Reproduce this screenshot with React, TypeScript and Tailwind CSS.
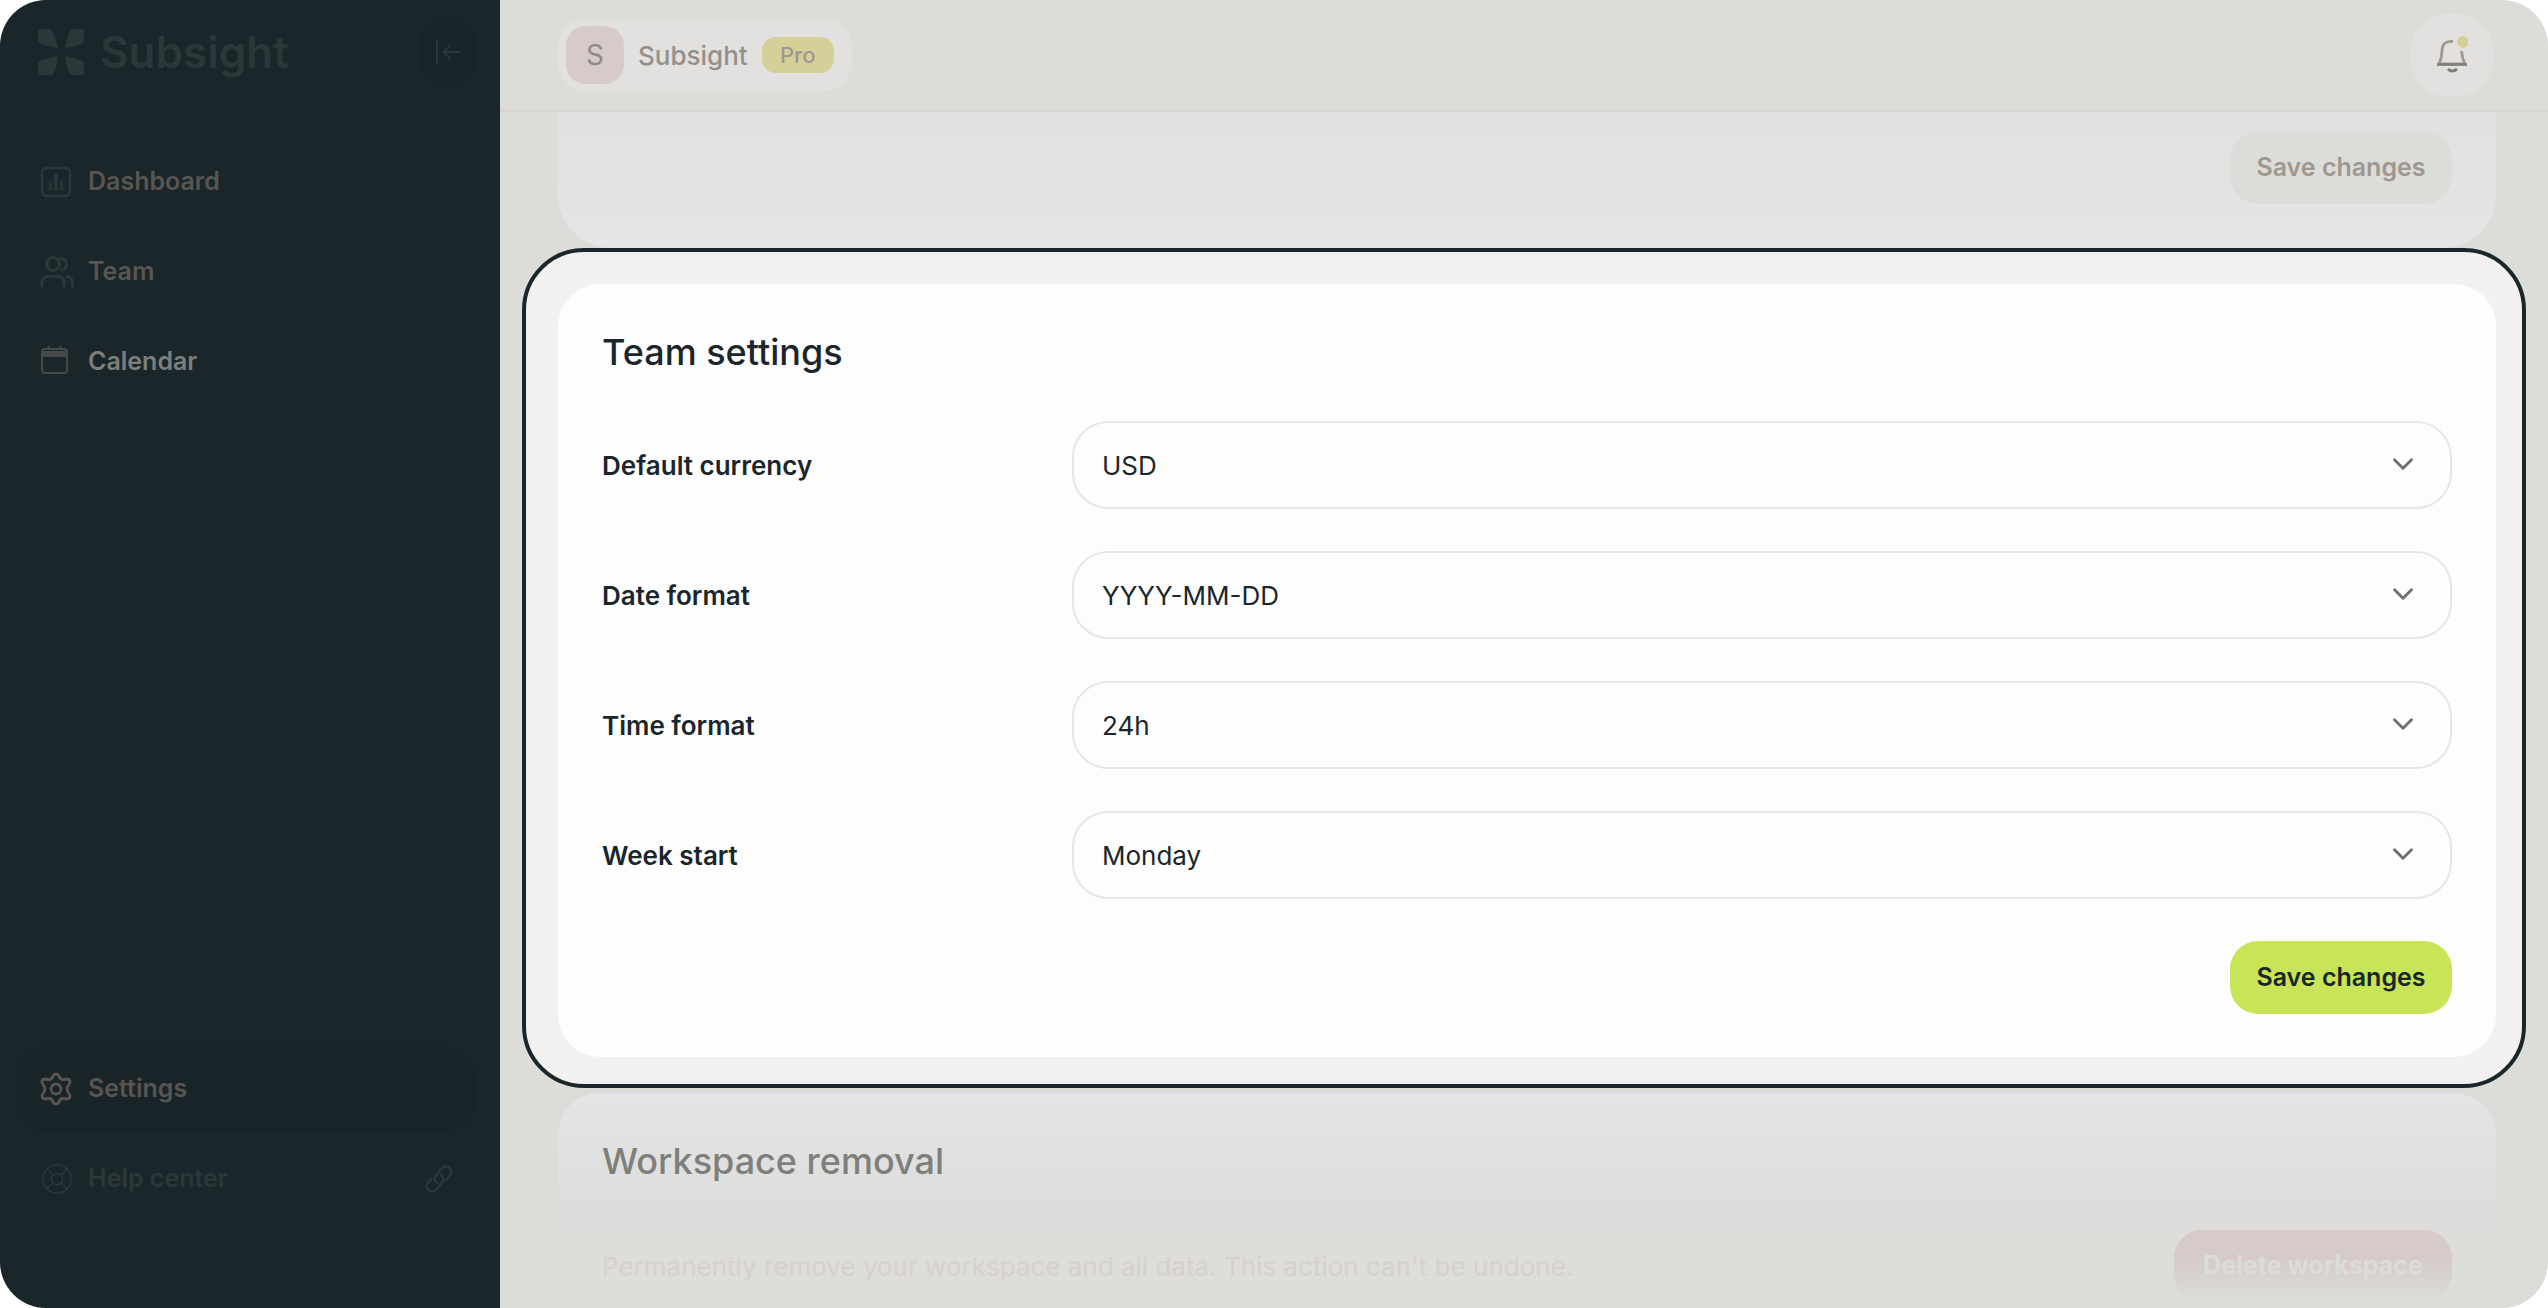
import { useId, type ReactNode } from 'react'
import { ChevronDown, LifeBuoy } from 'lucide-react'

interface IconProps {
  className?: string
}

const fields = [
  { label: 'Default currency', value: 'USD', options: ['USD', 'EUR', 'GBP'] },
  { label: 'Date format', value: 'YYYY-MM-DD', options: ['YYYY-MM-DD', 'DD-MM-YYYY', 'MM-DD-YYYY'] },
  { label: 'Time format', value: '24h', options: ['24h', '12h'] },
  { label: 'Week start', value: 'Monday', options: ['Monday', 'Sunday'] },
]

function LogoMark() {
  return (
    <svg viewBox="0 0 46 46" className="h-[46px] w-[46px]" fill="currentColor" aria-hidden="true">
      <path d="M3 0h8c4 1 7 10 9 19C10 17 0 16 0 11V3Q0 0 3 0Z" />
      <path d="M43 0h-8c-4 1-6 10-8 19 10-2 19-3 19-8V3q0-3-3-3Z" />
      <path d="M0 46V35c0-4 10-6 20-8-1 8-3 19-7 19Z" />
      <path d="M46 46V35c0-4-9-6-19-8 1 8 3 19 7 19Z" />
    </svg>
  )
}

function CollapseIcon() {
  return (
    <svg viewBox="0 0 26 26" className="h-[26px] w-[26px]" fill="none" stroke="currentColor" strokeWidth="2" aria-hidden="true">
      <path d="M2 1v24M25 13H8M16 6l-8 7 8 7" />
    </svg>
  )
}

function DashboardIcon({ className }: IconProps) {
  return (
    <svg viewBox="0 0 32 32" className={className} fill="none" stroke="currentColor" strokeWidth="2.5" strokeLinecap="round">
      <rect x="2" y="2" width="28" height="28" rx="5" />
      <path d="M10.5 17.500v6M21.500 14.500v9" />
      <path d="M16 9v14" strokeWidth="3.500" />
    </svg>
  )
}

function TeamIcon({ className }: IconProps) {
  return (
    <svg viewBox="0 0 34 32" className={className} fill="none" stroke="currentColor" strokeWidth="3.200" strokeLinecap="round">
      <circle cx="13" cy="8" r="6.500" />
      <path d="M20.500 2.500c4 0 6 2.500 6 5.500s-2 6-5 6M2 30v-3c0-4 3-6.500 6.500-6.500H18c4 0 6 2.500 6 6.500v3M27.500 20.500c3 .5 5 3 5 6V30" />
    </svg>
  )
}

function CalendarIcon({ className }: IconProps) {
  return (
    <svg viewBox="0 3 32 32" className={className} fill="none" stroke="currentColor" strokeWidth="2">
      <rect x="2" y="6" width="25" height="24" rx="3" />
      <path d="M2 9h25v4H2z" fill="currentColor" />
      <path d="M8.500 2v5M20.500 2v5" />
    </svg>
  )
}

function SettingsIcon({ className }: IconProps) {
  return (
    <svg viewBox="0 0 32 34" className={className} fill="none" stroke="currentColor" strokeWidth="2.800" strokeLinejoin="round">
      <path d="M16 2q2 0 3 2l1 2q1 2 4 1.500l3-.5q3 0 3 3 0 1-1 2.500-2 2.500-2 4.500t2 4.500q1 1.500 1 2.500 0 3-3 3l-3-.5q-3-.5-4 1.500l-1 2q-1 2-3 2t-3-2l-1-2q-1-2-4-1.500L5 27q-3 0-3-3 0-1 1-2.500Q5 19 5 17t-2-4.500Q2 11 2 10q0-3 3-3l3 .5q3 .5 4-1.500l1-2q1-2 3-2Z" />
      <circle cx="16" cy="17" r="5" />
    </svg>
  )
}

function LinkIcon() {
  return (
    <svg viewBox="0 0 28 28" className="h-[28px] w-[28px]" fill="none" stroke="currentColor" strokeWidth="2.500" strokeLinecap="round" aria-hidden="true">
      <path d="M12 18c-3-2-3-6 0-9l4-5c3-3 6-3 8.500-1s2.500 5 0 8L21 15" />
      <path d="M16 10c3 2 3 6 0 9l-4 5c-3 3-6 3-8.500 1s-2.500-5 0-8L7 13" />
    </svg>
  )
}

function BellIcon() {
  return (
    <svg viewBox="0 0 32 40" className="h-10 w-8" fill="none" aria-hidden="true">
      <path d="M17 6.500C9 5.500 6 10 6 16c0 6-1 9-3 13h26c-2-4-3-7-3.500-13" stroke="#a09890" strokeWidth="2.800" />
      <path d="M1 29.500h30" stroke="#7c7f7a" strokeWidth="2.500" />
      <path d="M12 34q4 4 9 0" stroke="#7c7f7a" strokeWidth="3" />
      <circle cx="27" cy="7" r="6" fill="#d6cf98" />
    </svg>
  )
}

interface NavItemProps {
  label: string
  icon: ReactNode
  className: string
  trailing?: ReactNode
}

function NavItem({ label, icon, className, trailing }: NavItemProps) {
  return (
    <a href="#" className={`flex h-[86px] items-center rounded-[36px] px-6 text-[25px] font-semibold ${className}`}>
      <span className="flex w-12">{icon}</span>
      <span className="flex-1">{label}</span>
      {trailing}
    </a>
  )
}

function Sidebar() {
  return (
    <aside className="flex w-[500px] shrink-0 flex-col bg-[#1a262a] pr-[23px] pb-[86px] pl-4">
      <div className="flex h-[104px] items-center justify-between pl-[22px] text-[#2b3839]">
        <a href="#" className="flex items-center gap-4">
          <LogoMark />
          <span className="text-[44px] leading-[56px] font-semibold">Subsight</span>
        </a>
        <button aria-label="Collapse sidebar" className="flex h-[58px] w-[58px] items-center justify-center rounded-[20px] bg-[#182428]">
          <CollapseIcon />
        </button>
      </div>
      <nav className="mt-[35px] flex flex-1 flex-col gap-1">
        <NavItem label="Dashboard" className="text-[#595551]" icon={<DashboardIcon className="h-8 w-8 text-[#2b3839]" />} />
        <NavItem label="Team" className="text-[#595551]" icon={<TeamIcon className="h-8 w-[34px] text-[#2b3839]" />} />
        <NavItem label="Calendar" className="text-[#7c7f7a]" icon={<CalendarIcon className="h-8 w-8 text-[#454a48]" />} />
        <div className="mt-auto flex flex-col gap-1">
          <NavItem label="Settings" className="bg-[#182428] text-[#595551]" icon={<SettingsIcon className="h-[34px] w-8" />} />
          <NavItem
            label="Help center"
            className="text-[#2b3839]"
            icon={<LifeBuoy className="h-[34px] w-[34px]" strokeWidth={1} />}
            trailing={<LinkIcon />}
          />
        </div>
      </nav>
    </aside>
  )
}

function Header() {
  return (
    <header className="flex h-[112px] shrink-0 items-center justify-between border-b-2 border-[#d9d3cf] pr-[55px] pl-[58px]">
      <button className="flex h-[72px] items-center rounded-[28px] bg-[#e2e1e0] pr-[18px] pl-2">
        <span className="flex h-[58px] w-[58px] items-center justify-center rounded-[20px] bg-[#d6cbc8] text-[28px] text-[#8f8b85]">S</span>
        <span className="ml-[14px] text-[26px] font-medium text-[#949089]">Subsight</span>
        <span className="ml-[14px] flex h-9 w-[72px] items-center justify-center rounded-[14px] bg-[#d6cf98] text-[22px] font-medium text-[#a09890]">Pro</span>
      </button>
      <button aria-label="Notifications" className="flex h-[82px] w-[82px] items-center justify-center rounded-[36px] bg-[#e2e1e0]">
        <BellIcon />
      </button>
    </header>
  )
}

function SelectField({ label, value, options }: (typeof fields)[number]) {
  const id = useId()

  return (
    <div className="flex items-center">
      <label htmlFor={id} className="w-[470px] shrink-0 text-[26px] font-semibold">
        {label}
      </label>
      <div className="relative flex-1">
        <select id={id} defaultValue={value} className="h-[88px] w-full appearance-none rounded-[36px] border-2 border-[#e5e6e9] bg-transparent px-7 text-[26px]">
          {options.map((option) => (
            <option key={option}>{option}</option>
          ))}
        </select>
        <ChevronDown className="pointer-events-none absolute top-[26px] right-8 h-[34px] w-[34px] text-[#6c6f6c]" strokeWidth={2} />
      </div>
    </div>
  )
}

export default function App() {
  return (
    <div className="flex min-h-screen overflow-hidden rounded-[46px] bg-[#dcddd8] font-[Inter,sans-serif] text-[#1a262a]">
      <Sidebar />
      <div className="flex min-w-0 flex-1 flex-col">
        <Header />
        <main className="flex flex-1 flex-col">
          <section className="mr-[52px] ml-[58px] flex h-[136px] justify-end rounded-b-[54px] bg-linear-to-b from-[#e2e1e1] to-[#e4e5e7] pt-5 pr-11">
            <button disabled className="h-[72px] w-[222px] rounded-[28px] bg-[#dcddd8] text-[25px] font-semibold text-[#a09890]">
              Save changes
            </button>
          </section>

          <div className="mr-[22px] ml-[22px] rounded-[62px] border-4 border-[#1a262a] bg-[#f2f1ef] pt-8 pr-[26px] pb-[27px] pl-8">
            <section className="flex flex-col rounded-[42px] bg-[#fdfdfe] px-11 pt-11 pb-[43px]">
              <h2 className="text-[36px] leading-[48px] font-medium">Team settings</h2>
              <form className="mt-[45px] flex flex-col gap-[42px]">
                {fields.map((field) => (
                  <SelectField key={field.label} {...field} />
                ))}
                <button type="button" className="h-[73px] w-[222px] self-end rounded-[28px] bg-[#c7e556] text-[25px] font-semibold">
                  Save changes
                </button>
              </form>
            </section>
          </div>

          <section className="mt-[5px] mr-[52px] ml-[58px] flex-1 rounded-t-[42px] bg-linear-to-b from-[#e4e5e7] via-[#dfdddc] to-[#dcddd8] px-11 pt-11">
            <h2 className="text-[36px] leading-[48px] font-medium text-[#7c7f7a]">Workspace removal</h2>
            <div className="mt-[45px] flex items-center justify-between">
              <p className="text-[26px] text-[#d8d0cd]">Permanently remove your workspace and all data. This action can't be undone.</p>
              <button className="h-[72px] w-[278px] rounded-[28px] bg-linear-to-b from-[#d6cbc8] from-40% to-[#dcddd8] text-[25px] font-bold text-[#dcddd8]">
                Delete workspace
              </button>
            </div>
          </section>
        </main>
      </div>
    </div>
  )
}
